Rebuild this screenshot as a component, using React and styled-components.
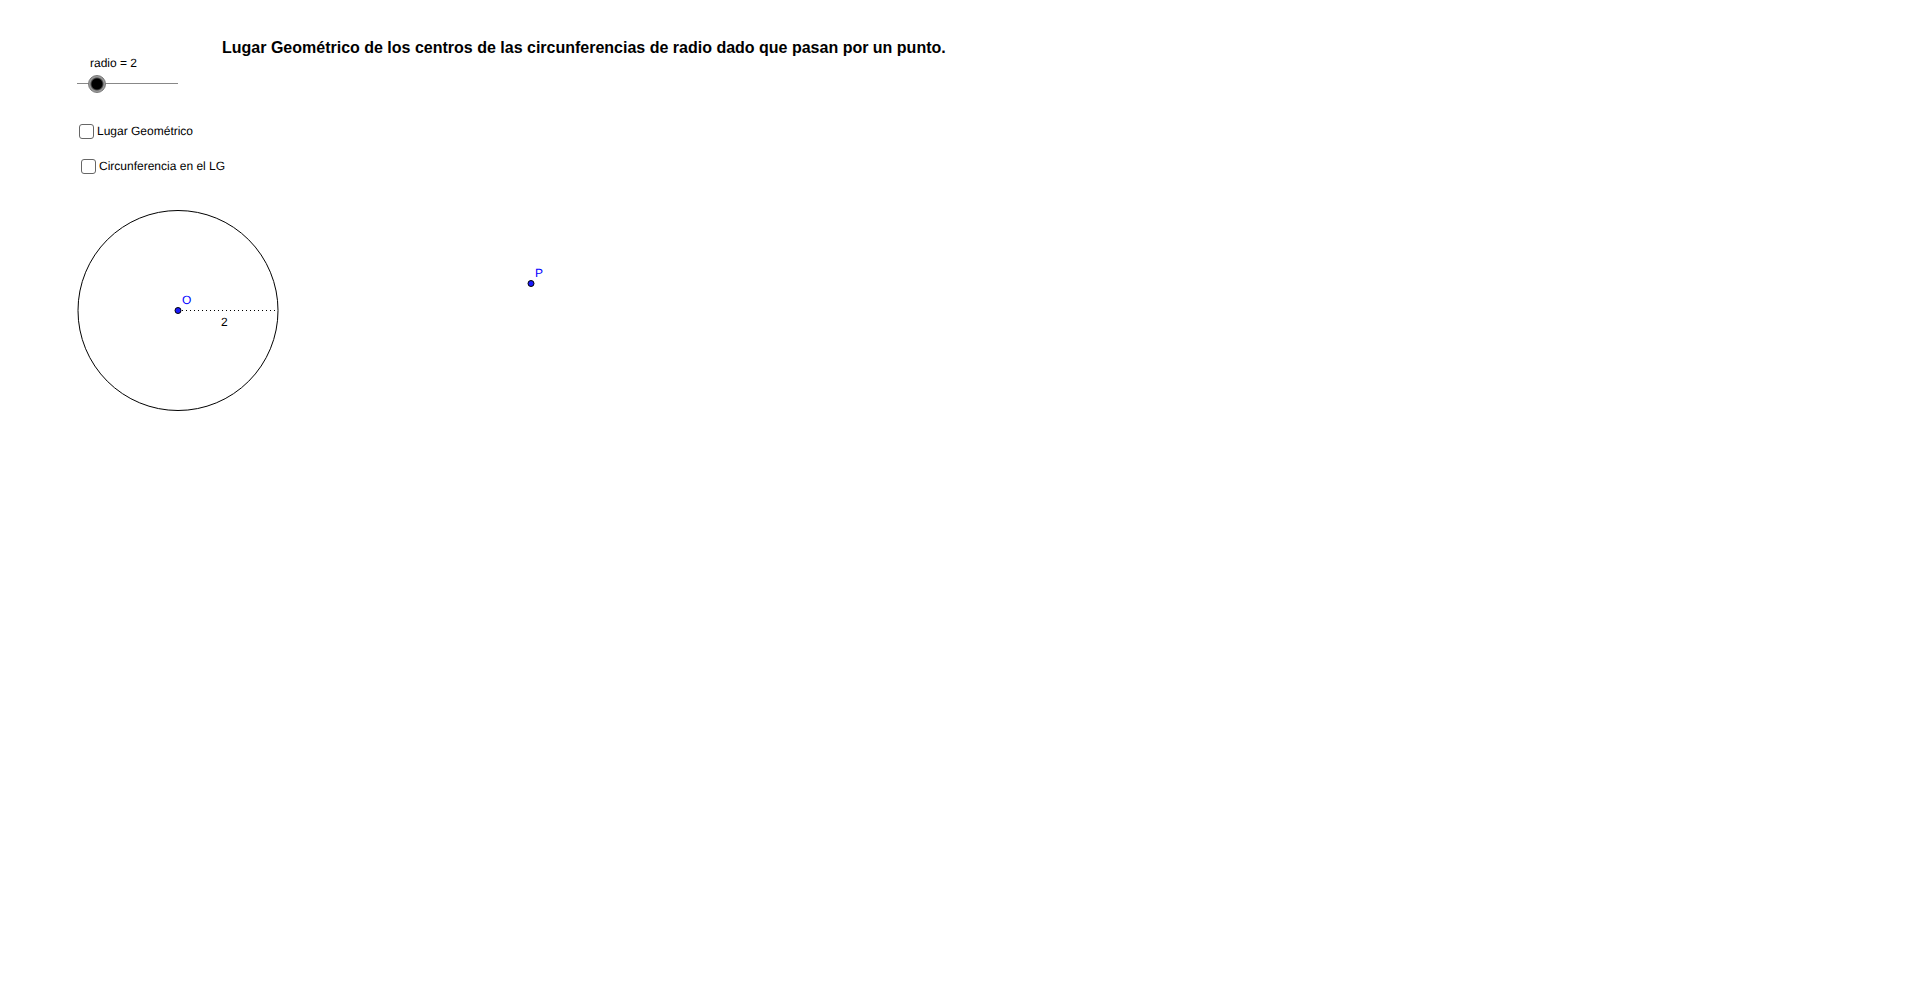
import React, { useState } from "react";
import styled, { createGlobalStyle } from "styled-components";

const GlobalStyle = createGlobalStyle`
  body {
    margin: 0;
    background: #fff;
    color: #000;
    font: 12px/14px "Liberation Sans", Arial, sans-serif;
    text-rendering: geometricPrecision;
  }
`;

const Board = styled.main`
  display: flex;
  flex-direction: column;
  padding: 39px 0 0 68px;
`;

const Header = styled.header`
  display: flex;
  align-items: flex-start;
  gap: 35px;
`;

const Title = styled.h1`
  margin: 0;
  font-size: 16px;
  line-height: 18px;
  text-rendering: auto;
`;

const SliderField = styled.label`
  display: flex;
  flex-direction: column;
  flex: none;
  padding-top: 17px;
  gap: 4px;
`;

const SliderText = styled.span`
  padding-left: 22px;
`;

const Slider = styled.input`
  appearance: none;
  width: 119px;
  height: 19px;
  margin: 0;
  background: linear-gradient(#888, #888) center / 101px 1px no-repeat;
  cursor: pointer;

  &::-webkit-slider-thumb {
    appearance: none;
    box-sizing: border-box;
    width: 18px;
    height: 18px;
    border: 1px solid #777;
    border-radius: 50%;
    background: radial-gradient(circle, #000 5px, #999 7px);
  }
`;

const Options = styled.div`
  display: flex;
  flex-direction: column;
  gap: 20px;
  padding: 31px 0 0 11px;
`;

const Option = styled.label`
  display: flex;
  align-items: flex-start;
  gap: 3px;
  padding-left: ${(p) => (p.$indent ? 2 : 0)}px;
`;

const Box = styled.input`
  appearance: none;
  box-sizing: border-box;
  width: 15px;
  height: 15px;
  margin: 0;
  border: 1px solid #666;
  border-radius: 3px;

  &:checked {
    background: #666;
  }
`;

const Drawing = styled.svg`
  display: block;
  width: 100%;
  height: 240px;
  margin-top: 26px;
  overflow: visible;
  font-size: 12px;
`;

const Curve = styled.circle`
  fill: none;
  stroke: #000;
`;

const Segment = styled.path`
  fill: none;
  stroke: #000;
  stroke-dasharray: 1 3;
`;

const Point = styled.circle`
  fill: #1a1aff;
  stroke: #000;
`;

const PointName = styled.text`
  fill: #00f;
`;

const UNIT = 50;
const CENTER = { x: 110, y: 110.5 };
const P = { x: 463, y: 83.5 };

export default function App() {
  const [radius, setRadius] = useState(2);
  const [locus, setLocus] = useState(false);
  const [onLocus, setOnLocus] = useState(false);
  const r = radius * UNIT;

  return (
    <>
      <GlobalStyle />
      <Board>
        <Header>
          <SliderField>
            <SliderText>radio = {radius}</SliderText>
            <Slider
              type="range"
              min="0"
              max="10"
              step="0.1"
              value={radius}
              onChange={(e) => setRadius(Number(e.target.value))}
            />
          </SliderField>
          <Title>
            Lugar Geométrico de los centros de las circunferencias de radio dado que pasan por un punto.
          </Title>
        </Header>
        <Options>
          <Option>
            <Box type="checkbox" checked={locus} onChange={() => setLocus(!locus)} />
            Lugar Geométrico
          </Option>
          <Option $indent>
            <Box type="checkbox" checked={onLocus} onChange={() => setOnLocus(!onLocus)} />
            Circunferencia en el LG
          </Option>
        </Options>
        <Drawing>
          <Curve cx={CENTER.x} cy={CENTER.y} r={r} />
          <Segment d={`M${CENTER.x} ${CENTER.y}h${r}`} />
          {locus && <Curve cx={P.x} cy={P.y} r={r} />}
          {onLocus && <Curve cx={P.x + r} cy={P.y} r={r} />}
          <Point cx={CENTER.x} cy={CENTER.y} r="3" />
          <PointName x={CENTER.x + 4} y={CENTER.y - 7}>O</PointName>
          <text x={CENTER.x + r / 2 - 7} y={CENTER.y + 15}>{radius}</text>
          <Point cx={P.x} cy={P.y} r="3" />
          <PointName x={P.x + 4} y={P.y - 7}>P</PointName>
        </Drawing>
      </Board>
    </>
  );
}
